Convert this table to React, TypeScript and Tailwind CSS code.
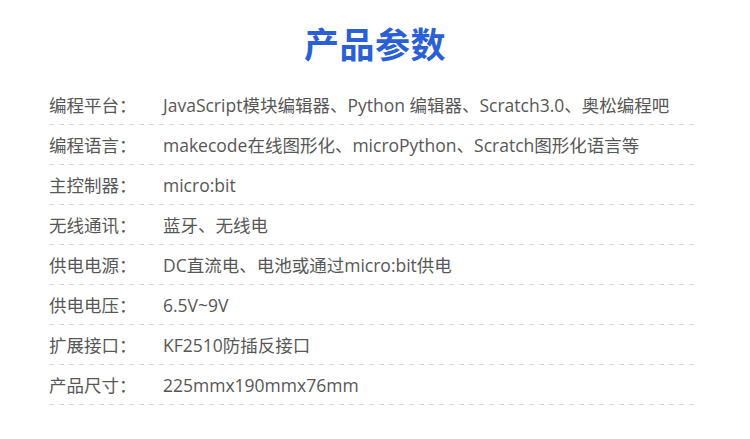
import React from "react";

const rows: [string, string][] = [
  ["编程平台：", "JavaScript模块编辑器、Python 编辑器、Scratch3.0、奥松编程吧"],
  ["编程语言：", "makecode在线图形化、microPython、Scratch图形化语言等"],
  ["主控制器：", "micro:bit"],
  ["无线通讯：", "蓝牙、无线电"],
  ["供电电源：", "DC直流电、电池或通过micro:bit供电"],
  ["供电电压：", "6.5V~9V"],
  ["扩展接口：", "KF2510防插反接口"],
  ["产品尺寸：", "225mmx190mmx76mm"],
];

export default function App() {
  return (
    <div
      className="w-[750px] h-[439px] bg-white overflow-hidden"
      style={{ fontFamily: '"Open Sans", "Noto Sans CJK SC", sans-serif' }}
    >
      <div className="h-[85px] flex items-center justify-center">
        <h1
          className="text-[35px] font-bold text-[#2a5fd5] leading-none tracking-[0.5px]"
          style={{ fontFamily: '"Noto Sans CJK SC", sans-serif' }}
        >
          产品参数
        </h1>
      </div>
      <div className="ml-[49px] w-[647px]">
        {rows.map(([k, v]) => (
          <div key={k} className="h-[40px] flex flex-col">
            <div className="flex-1 flex items-center pt-[2px] text-[17.5px] text-[#575757] leading-none">
              <div className="w-[114px] shrink-0">{k}</div>
              <div className="whitespace-nowrap">{v}</div>
            </div>
            <div className="h-px bg-[repeating-linear-gradient(to_right,#d8d8d8_0_5px,transparent_5px_10px)]" />
          </div>
        ))}
      </div>
    </div>
  );
}
